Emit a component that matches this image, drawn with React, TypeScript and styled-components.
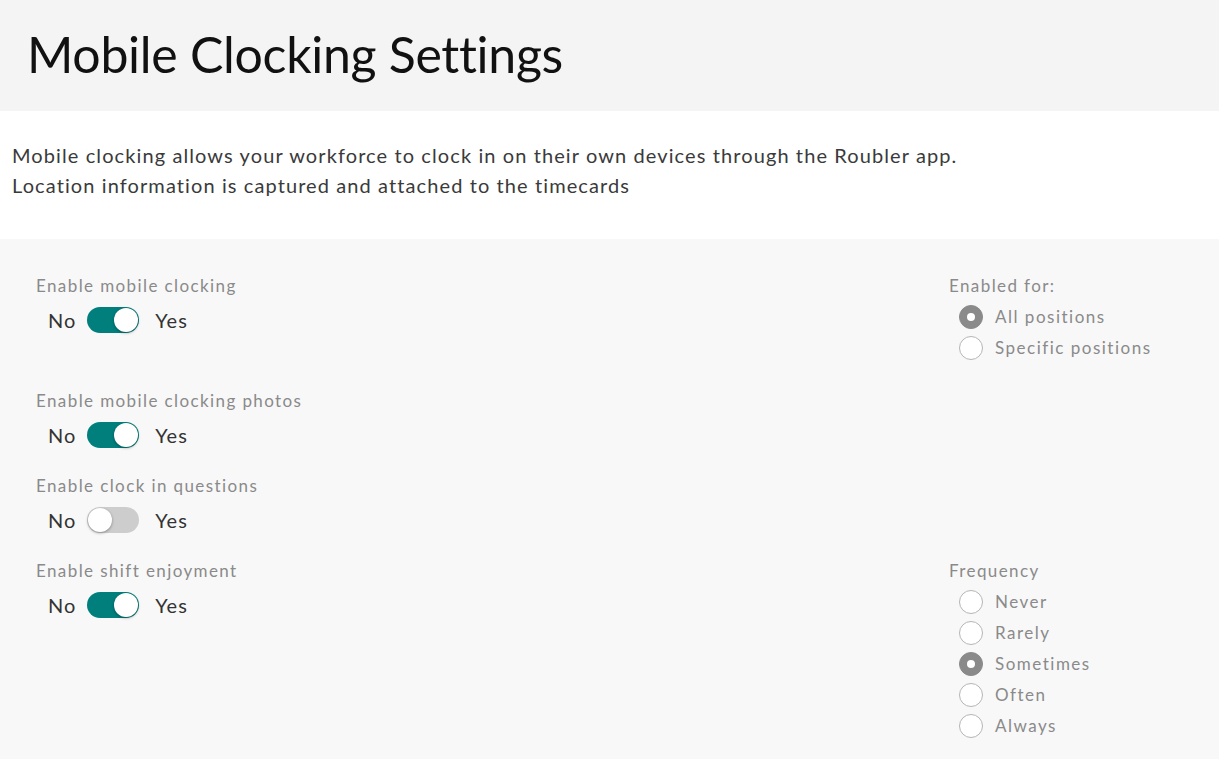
import styled, { createGlobalStyle } from 'styled-components';

const GlobalStyle = createGlobalStyle`
  html, body {
    margin: 0;
    padding: 0;
    background: #f8f8f8;
    font-family: Lato, 'Open Sans', sans-serif;
  }
`;

const Page = styled.div`
  width: 1219px;
  min-height: 759px;
  background: #f8f8f8;
`;

const Header = styled.header`
  height: 111px;
  background: #f4f4f4;
  display: flex;
  align-items: center;
  padding: 0 0 4px 27px;
  box-sizing: border-box;
`;

const Title = styled.h1`
  margin: 0;
  font-size: 50px;
  font-weight: 400;
  color: #111;
  letter-spacing: -0.3px;
`;

const Intro = styled.section`
  background: #fff;
  padding: 29px 12px 35px;
  height: 128px;
  box-sizing: border-box;
  font-size: 20px;
  line-height: 30px;
  color: #3a3a3a;
  letter-spacing: 1.1px;
`;

const Settings = styled.section`
  padding: 35px 24px 20px 36px;
  display: flex;
  flex-direction: column;
  gap: 26px;
`;

const Row = styled.div`
  display: grid;
  grid-template-columns: 1fr 246px;
`;

const Field = styled.div`
  display: flex;
  flex-direction: column;
`;

const Label = styled.div`
  font-size: 17px;
  line-height: 24px;
  color: #8a8a8a;
  letter-spacing: 1.4px;
`;

const ToggleRow = styled.div`
  display: flex;
  align-items: center;
  margin-top: 9px;
  padding-left: 12px;
  height: 26px;
  font-size: 20px;
  color: #333;
  letter-spacing: 1px;
`;

const Track = styled.span<{ $on: boolean }>`
  position: relative;
  width: 52px;
  height: 26px;
  margin: 0 16px 0 11px;
  border-radius: 13px;
  background: ${({ $on }) => ($on ? '#007f7d' : '#cdcdcd')};
`;

const Knob = styled.span<{ $on: boolean }>`
  position: absolute;
  top: 1px;
  left: ${({ $on }) => ($on ? '27px' : '1px')};
  width: 24px;
  height: 24px;
  border-radius: 50%;
  background: #fff;
  box-shadow: 0 1px 3px rgba(0, 0, 0, 0.35);
`;

const RadioList = styled.div`
  display: flex;
  flex-direction: column;
  margin-top: 3px;
  padding-left: 10px;
`;

const RadioItem = styled.div`
  display: flex;
  align-items: center;
  gap: 12px;
  height: 31px;
  font-size: 17px;
  color: #8a8a8a;
  letter-spacing: 1.5px;
`;

const Dot = styled.span<{ $checked: boolean }>`
  width: 24px;
  height: 24px;
  box-sizing: border-box;
  border-radius: 50%;
  background: ${({ $checked }) => ($checked ? '#8a8a8a' : '#fff')};
  border: 1px solid ${({ $checked }) => ($checked ? '#8a8a8a' : '#b5b5b5')};
  display: flex;
  align-items: center;
  justify-content: center;
  &::after {
    content: '';
    display: ${({ $checked }) => ($checked ? 'block' : 'none')};
    width: 8px;
    height: 8px;
    border-radius: 50%;
    background: #fff;
  }
`;

function Toggle({ on }: { on: boolean }) {
  return (
    <ToggleRow>
      <span>No</span>
      <Track $on={on}>
        <Knob $on={on} />
      </Track>
      <span>Yes</span>
    </ToggleRow>
  );
}

function RadioGroup({ title, options, value }: { title: string; options: string[]; value: string }) {
  return (
    <Field>
      <Label>{title}</Label>
      <RadioList>
        {options.map((o) => (
          <RadioItem key={o}>
            <Dot $checked={o === value} />
            {o}
          </RadioItem>
        ))}
      </RadioList>
    </Field>
  );
}

export default function App() {
  return (
    <Page>
      <GlobalStyle />
      <Header>
        <Title>Mobile Clocking Settings</Title>
      </Header>
      <Intro>
        Mobile clocking allows your workforce to clock in on their own devices through the Roubler app.
        <br />
        Location information is captured and attached to the timecards
      </Intro>
      <Settings>
        <Row>
          <Field>
            <Label>Enable mobile clocking</Label>
            <Toggle on />
          </Field>
          <RadioGroup
            title="Enabled for:"
            options={['All positions', 'Specific positions']}
            value="All positions"
          />
        </Row>
        <Row>
          <Field>
            <Label>Enable mobile clocking photos</Label>
            <Toggle on />
          </Field>
        </Row>
        <Row>
          <Field>
            <Label>Enable clock in questions</Label>
            <Toggle on={false} />
          </Field>
        </Row>
        <Row>
          <Field>
            <Label>Enable shift enjoyment</Label>
            <Toggle on />
          </Field>
          <RadioGroup
            title="Frequency"
            options={['Never', 'Rarely', 'Sometimes', 'Often', 'Always']}
            value="Sometimes"
          />
        </Row>
      </Settings>
    </Page>
  );
}
